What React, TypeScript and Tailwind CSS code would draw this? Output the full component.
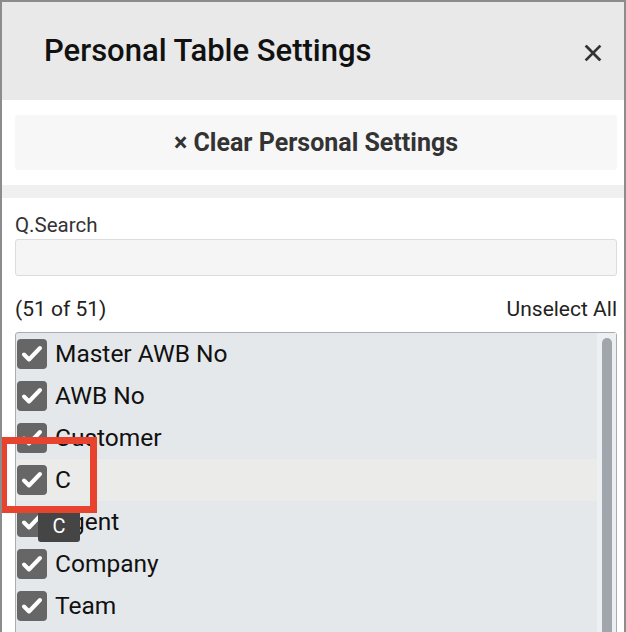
import React from "react";

const items = ["Master AWB No", "AWB No", "Customer", "C", "Agent", "Company", "Team"];

const Check = () => (
  <div className="w-[30px] h-[30px] rounded-[4px] bg-[#666666] flex items-center justify-center shrink-0">
    <svg width="24" height="24" viewBox="0 0 24 24">
      <path d="M4 12.5l5 5L20 6" fill="none" stroke="#fff" strokeWidth="4" strokeLinecap="round" strokeLinejoin="round" />
    </svg>
  </div>
);

export default function App() {
  return (
    <div className="relative w-[626px] h-[632px] overflow-hidden bg-white border-t-2 border-x-2 border-[#8c8c8c] font-['Roboto',sans-serif] text-[#222]">
      <div className="h-[98px] bg-[#e9e9e9] flex items-center justify-between pl-[42px] pr-[20px]">
        <h1 className="text-[31px] font-medium text-[#111]">Personal Table Settings</h1>
        <svg width="22" height="22" viewBox="0 0 24 24" className="mt-[4px]">
          <path d="M5 5l14 14M19 5L5 19" stroke="#333" strokeWidth="3" strokeLinecap="square" />
        </svg>
      </div>
      <div className="py-[15px] pl-[13px] pr-[7px]">
        <button className="w-full h-[55px] bg-[#f7f7f7] rounded-[3px] text-[25px] font-bold text-[#333] flex items-center justify-center">
          × Clear Personal Settings
        </button>
      </div>
      <div className="h-[13px] bg-[#f0f0f0]" />
      <div className="pl-[13px] pr-[7px] pt-[14px]">
        <div className="text-[20.5px] text-[#333] leading-[26px]">Q.Search</div>
        <input className="mt-[1px] w-full h-[37px] bg-[#f5f5f5] border border-[#dcdcdc] rounded-[3px] outline-none" />
        <div className="flex justify-between mt-[20px] text-[21px] text-[#222] leading-[26px]">
          <span>(51 of 51)</span>
          <span>Unselect All</span>
        </div>
        <div className="relative mt-[10px] h-[320px] border border-[#a9adb1] rounded-t-[3px] bg-[#e5e8eb] flex">
          <div className="flex-1 flex flex-col">
            {items.map((t) => (
              <div
                key={t}
                className={`h-[42px] shrink-0 flex items-center gap-[8px] pl-[1px] ${t === "C" ? "bg-[#ebebea]" : ""}`}
              >
                <Check />
                <span className="text-[24.5px] text-[#111]">{t}</span>
              </div>
            ))}
          </div>
          <div className="w-[19px] bg-[#edf0f2] flex justify-center pt-[5px]">
            <div className="w-[10px] h-full bg-[#a0a6ab] rounded-t-full" />
          </div>
          <div className="absolute left-[22px] top-[176px] w-[42px] h-[33px] bg-[#454545] rounded-[3px] flex items-center justify-center text-white text-[20px]">
            C
          </div>
        </div>
      </div>
      <div className="absolute left-[-2px] top-[435px] w-[97px] h-[76px] border-[7px] border-[#e8432e]" />
    </div>
  );
}
